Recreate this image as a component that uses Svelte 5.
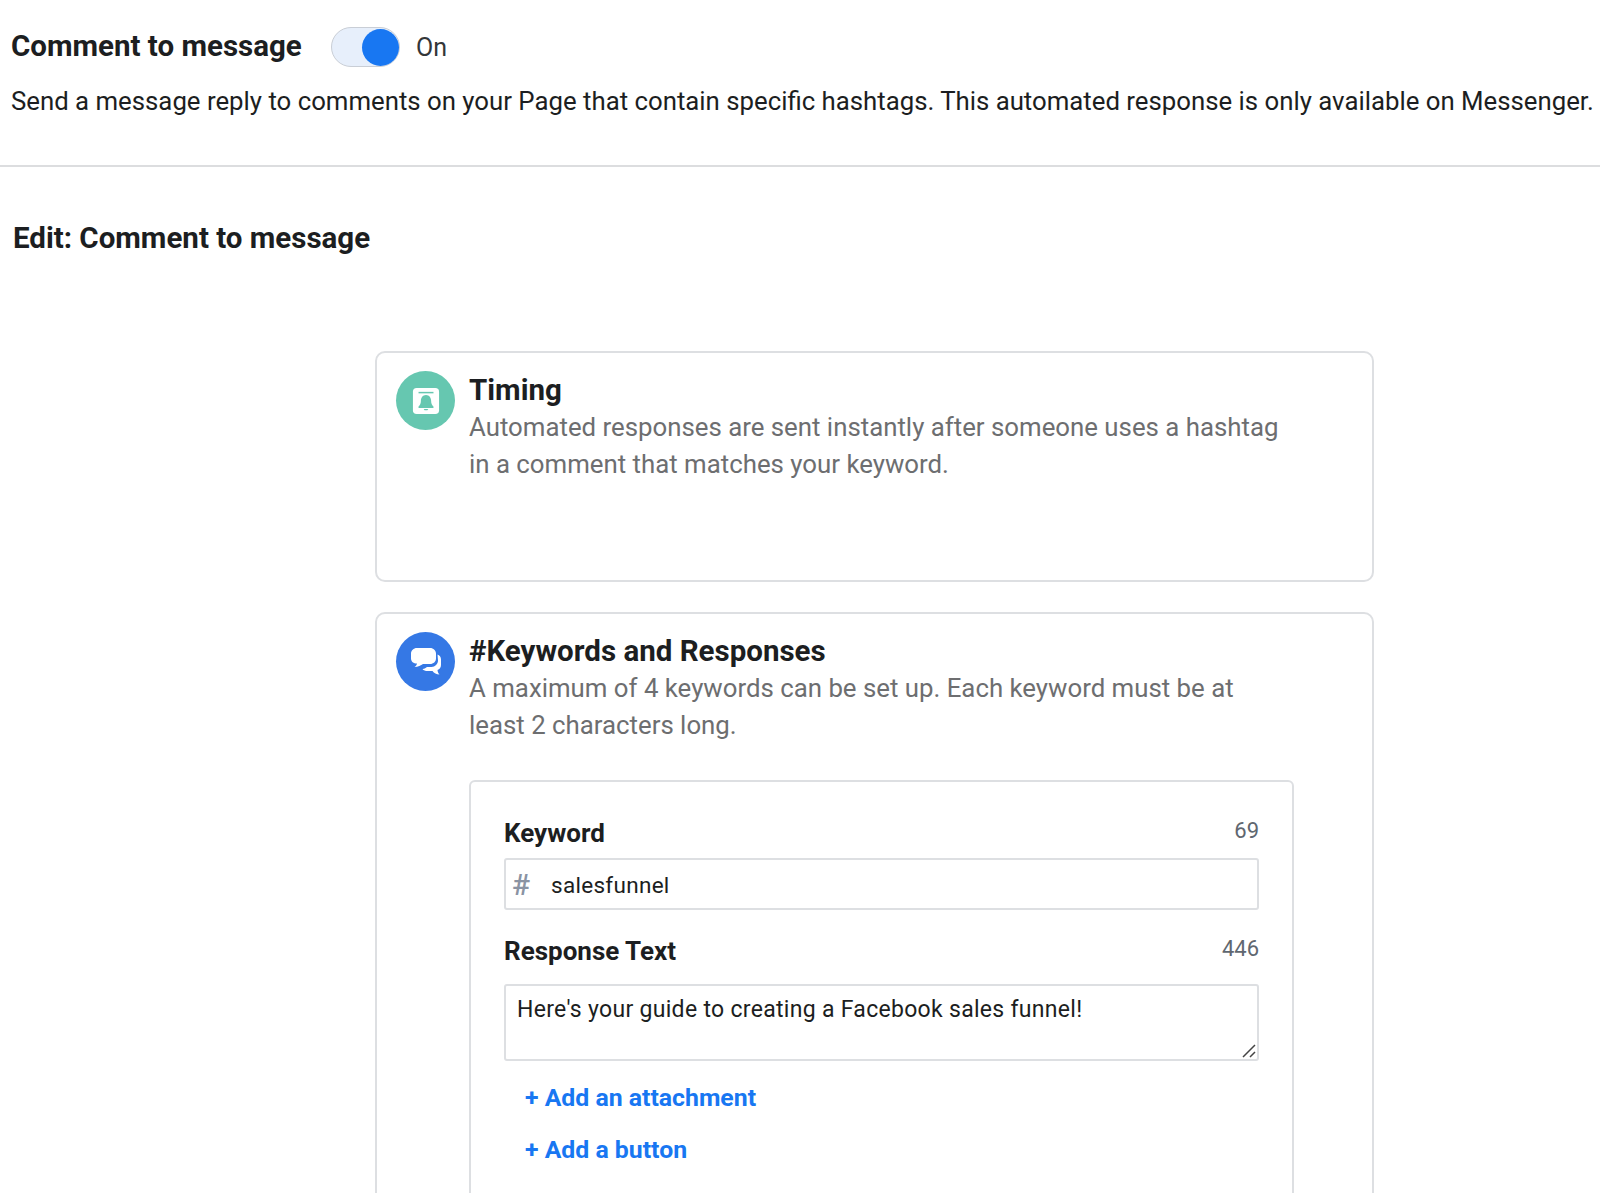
<script>
    let keyword = "salesfunnel";
    let response = "Here's your guide to creating a Facebook sales funnel!";
</script>

<div class="page">
    <header class="top">
        <div class="title-row">
            <h1>Comment to message</h1>
            <span class="toggle"><span class="knob"></span></span>
            <span class="state">On</span>
        </div>
        <p class="intro">Send a message reply to comments on your Page that contain specific hashtags. This automated response is only available on Messenger.</p>
    </header>

    <h2 class="edit">Edit: Comment to message</h2>

    <div class="cards">
        <section class="card timing">
            <div class="badge teal">
                <svg width="28" height="28" viewBox="0 0 30 30">
                    <rect x="1" y="1" width="28" height="28" rx="4" fill="#fff"/>
                    <path d="M7 6h16" stroke="#66c7b0" stroke-width="1.6"/>
                    <path d="M15 8.500c-3.500 0-5.500 3-5.500 6.500 0 2.500-1 4.500-2.500 6v1.500h16V21c-1.500-1.500-2.500-3.500-2.500-6 0-3.500-2-6.500-5.500-6.500z" fill="#66c7b0"/>
                    <path d="M12.500 23.500h5l-1 1.500h-3z" fill="#66c7b0"/>
                </svg>
            </div>
            <div class="body">
                <h3>Timing</h3>
                <p>Automated responses are sent instantly after someone uses a hashtag<br>in a comment that matches your keyword.</p>
            </div>
        </section>

        <section class="card">
            <div class="badge blue">
                <svg width="30" height="27" viewBox="0 0 30 27">
                    <path d="M6 0h13c3.500 0 6 2.500 6 5.500v5c0 3-2.500 5.500-6 5.500h-7c-2 1.500-5 3-8.500 3 1.500-1 2.500-2.500 2.500-3.500C2.500 15.500 0 13.500 0 10.500v-5C0 2.500 2.500 0 6 0z" fill="#fff"/>
                    <path d="M26.500 6.500c2 .5 3.500 2.500 3.500 5V17c0 2.500-1.500 4.500-3.500 5 .2 2 1 3.500 2 4.500-3 0-5.500-1.500-7-3.500h-5c-2 0-4-.6-5-1.800 1.500-.4 3-1 4.500-2.200h4.500c3.500 0 6.500-3 6.500-6.500z" fill="#fff"/>
                </svg>
            </div>
            <div class="body">
                <h3>#Keywords and Responses</h3>
                <p>A maximum of 4 keywords can be set up. Each keyword must be at<br>least 2 characters long.</p>

                <div class="panel">
                    <div class="label-row">
                        <label for="kw">Keyword</label>
                        <span class="count">69</span>
                    </div>
                    <div class="input-wrap">
                        <span class="hash">#</span>
                        <input id="kw" type="text" bind:value={keyword} />
                    </div>

                    <div class="label-row second">
                        <label for="resp">Response Text</label>
                        <span class="count">446</span>
                    </div>
                    <div class="area-wrap">
                        <textarea id="resp" bind:value={response}></textarea>
                        <svg class="grip" width="14" height="14" viewBox="0 0 14 14">
                            <path d="M1 13 13 1M8 13l5-5" stroke="#444" stroke-width="1.500" fill="none"/>
                        </svg>
                    </div>

                    <div class="links">
                        <span class="add">+ Add an attachment</span>
                        <span class="add">+ Add a button</span>
                    </div>
                </div>
            </div>
        </section>
    </div>
</div>

<style>
    :global(body) {
        background: #fff;
        overflow: hidden;
    }

    .page {
        height: 1193px;
        overflow: hidden;
        font-family: Roboto, "Liberation Sans", sans-serif;
        color: #1c1e21;
    }

    .top {
        padding: 26px 0 0 11px;
        height: 139px;
        border-bottom: 2px solid #dcdddf;
    }

    .title-row {
        display: flex;
        align-items: center;
        height: 42px;
    }

    h1 {
        margin: -2px 0 0;
        width: 320px;
        font-size: 29.5px;
        font-weight: 700;
        white-space: nowrap;
    }

    .toggle {
        display: flex;
        align-items: center;
        justify-content: flex-end;
        width: 69px;
        height: 40px;
        box-sizing: border-box;
        border: 1.500px solid #c9ced6;
        border-radius: 20px;
        background: #e7effb;
    }

    .knob {
        width: 37px;
        height: 37px;
        border-radius: 50%;
        background: #1877f2;
    }

    .state {
        margin-left: 16px;
        font-size: 25px;
        color: #333639;
    }

    .intro {
        margin: 18px 0 0;
        font-size: 25.77px;
        line-height: 30px;
        white-space: nowrap;
        color: #1c1e21;
    }

    .edit {
        margin: 0;
        padding: 52px 0 0 13px;
        height: 39px;
        line-height: 38px;
        font-size: 29.5px;
        font-weight: 700;
        white-space: nowrap;
    }

    .cards {
        display: flex;
        flex-direction: column;
        gap: 30px;
        width: 999px;
        margin: 93px 0 0 375px;
    }

    .card {
        display: flex;
        box-sizing: border-box;
        border: 2px solid #dddfe2;
        border-radius: 10px;
        padding: 18px 19px;
        gap: 14px;
        background: #fff;
    }

    .timing {
        height: 231px;
    }

    .badge {
        flex: none;
        display: flex;
        align-items: center;
        justify-content: center;
        width: 59px;
        height: 59px;
        border-radius: 50%;
    }

    .teal {
        background: #66c7b0;
    }

    .blue {
        background: #3578e5;
    }

    .body {
        flex: 1;
        min-width: 0;
    }

    h3 {
        margin: 0;
        font-size: 29.5px;
        line-height: 38px;
        font-weight: 700;
        white-space: nowrap;
    }

    .body p {
        margin: 0;
        font-size: 25.8px;
        line-height: 37px;
        color: #6d6e70;
        white-space: nowrap;
    }

    .panel {
        box-sizing: border-box;
        width: 825px;
        margin-top: 36px;
        padding: 33px 33px 40px;
        border: 2px solid #dddfe2;
        border-radius: 6px;
    }

    .label-row {
        display: flex;
        justify-content: space-between;
        align-items: flex-start;
        height: 43px;
    }

    .second {
        height: 51px;
        margin-top: 23px;
    }

    label {
        font-size: 26px;
        line-height: 36px;
        font-weight: 700;
    }

    .count {
        font-size: 22px;
        line-height: 30px;
        margin-top: 1px;
        color: #606770;
    }

    .input-wrap {
        display: flex;
        align-items: center;
        box-sizing: border-box;
        height: 52px;
        border: 2px solid #dddfe2;
        border-radius: 3px;
    }

    .hash {
        width: 45px;
        padding-left: 6px;
        box-sizing: border-box;
        flex: none;
        font-size: 30px;
        font-weight: 500;
        color: #8a93a3;
    }

    input {
        flex: 1;
        min-width: 0;
        border: 0;
        outline: 0;
        padding: 2px 0 0;
        font: 400 22.5px Roboto, sans-serif;
        letter-spacing: 0.3px;
        color: #1c1e21;
        background: transparent;
    }

    .area-wrap {
        position: relative;
    }

    textarea {
        display: block;
        box-sizing: border-box;
        width: 100%;
        height: 77px;
        padding: 9px 11px;
        border: 2px solid #dddfe2;
        border-radius: 3px;
        outline: 0;
        resize: none;
        font: 400 23px/30px Roboto, sans-serif;
        letter-spacing: 0.3px;
        color: #1c1e21;
    }

    .grip {
        position: absolute;
        right: 3px;
        bottom: 3px;
    }

    .links {
        display: flex;
        flex-direction: column;
        gap: 21px;
        margin-top: 21px;
        padding-left: 21px;
    }

    .add {
        font-size: 24.8px;
        line-height: 31px;
        font-weight: 700;
        color: #1877f2;
    }
</style>
